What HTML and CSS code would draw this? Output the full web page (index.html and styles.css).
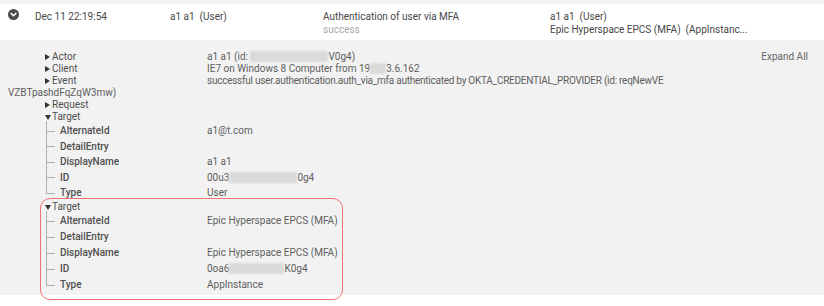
FILE: index.html
```html
<html>
    <head>
        <link rel="stylesheet" href="styles.css">
        <title>System Log</title>
    </head>
    <body>
        <div class="event">
            <div class="summary">
                <div class="cell toggle">
                    <svg width="11" height="11" viewBox="0 0 12 12"><circle cx="6" cy="6" r="6" fill="#4b4b4b"/><path d="M3.4 4.8 L6 7.3 L8.6 4.8" fill="none" stroke="#fff" stroke-width="1.6" stroke-linecap="round" stroke-linejoin="round"/></svg>
                </div>
                <div class="cell when">Dec 11 22:19:54</div>
                <div class="cell actor">a1 a1&nbsp; (User)</div>
                <div class="cell what">Authentication of user via MFA<br><span class="outcome">success</span></div>
                <div class="cell target">a1 a1&nbsp; (User)<br>Epic Hyperspace EPCS (MFA)&nbsp; (AppInstanc...</div>
            </div>

            <div class="detail">
                <a class="expandAll">Expand All</a>
                <div class="row"><span class="caret closed"></span><span class="label">Actor</span>a1 a1 (id: <span class="redact w78"></span>V0g4)</div>
                <div class="row"><span class="caret closed"></span><span class="label">Client</span>IE7 on Windows 8 Computer from 19<span class="redact w16"></span>3.6.162</div>
                <div class="row"><span class="caret closed"></span><span class="label">Event</span><span class="long">successful user.authentication.auth_via_mfa authenticated by OKTA_CREDENTIAL_PROVIDER (id: reqNewVE</span><br>VZBTpashdFqZqW3mw)</div>
                <div class="row"><span class="caret closed"></span><span class="label">Request</span></div>

                <div class="group">
                    <div class="row"><span class="caret open"></span><span class="label">Target</span></div>
                    <ul class="leaves">
                        <li><span class="key">AlternateId</span><span class="val">a1@t.com</span></li>
                        <li><span class="key">DetailEntry</span></li>
                        <li><span class="key">DisplayName</span><span class="val">a1 a1</span></li>
                        <li><span class="key">ID</span><span class="val">00u3<span class="redact w68"></span>0g4</span></li>
                        <li><span class="key">Type</span><span class="val">User</span></li>
                    </ul>
                </div>

                <div class="group marked">
                    <div class="row"><span class="caret open"></span><span class="label">Target</span></div>
                    <ul class="leaves wide">
                        <li><span class="key">AlternateId</span><span class="val">Epic Hyperspace EPCS (MFA)</span></li>
                        <li><span class="key">DetailEntry</span></li>
                        <li><span class="key">DisplayName</span><span class="val">Epic Hyperspace EPCS (MFA)</span></li>
                        <li><span class="key">ID</span><span class="val">0oa6<span class="redact w55"></span>K0g4</span></li>
                        <li><span class="key">Type</span><span class="val">AppInstance</span></li>
                    </ul>
                </div>
            </div>
        </div>
    </body>
</html>
```

FILE: styles.css
```css
html, body {margin: 0; padding: 0;}
body {font-family: Roboto, "Liberation Sans", sans-serif; font-size: 10px; background: #fff; color: #555;}

.event {padding-top: 4px; background: #f2f2f2; padding-bottom: 3px; border-bottom: 3px solid #fff;}

.summary {display: flex; background: #fff; height: 36px; padding-top: 6px; box-sizing: border-box; line-height: 13px; color: #474747;}
.summary .cell {flex: none;}
.toggle {width: 27px; padding-left: 8px; margin-top: -1px;}
.toggle svg {display: block;}
.when {width: 135px;}
.actor {width: 153px;}
.what {width: 227px;}
.target {flex: 1;}
.outcome {color: #a8a8a8;}

.detail {padding: 11px 16px 0 8px; height: 252px; box-sizing: border-box;}
.expandAll {float: right; color: #666; line-height: 12px;}

.row {line-height: 12px; color: #5e5e5e;}
.long {letter-spacing: -0.25px;}
.caret {display: inline-block; width: 7px; margin-left: 37px; height: 12px; vertical-align: top; position: relative;}
.caret::before {content: ""; position: absolute; left: 0; top: 3px; border-style: solid; border-color: transparent;}
.caret.closed::before {border-width: 3px 0 3px 5px; border-left-color: #333;}
.caret.open::before {top: 4px; border-width: 5px 3px 0 3px; border-top-color: #333;}
.label {display: inline-block; width: 155px; color: #4f4f4f;}

.group {position: relative;}
.leaves {list-style: none; margin: 0; padding: 0 0 0 52px;}
.leaves li {position: relative; display: flex; height: 15.5px; line-height: 15.5px; color: #5e5e5e;}
.leaves.wide li {height: 16px; line-height: 16px;}
.leaves li::before {content: ""; position: absolute; left: -14px; top: 50%; width: 9px; border-top: 1px solid #b0b0b0;}
.leaves li::after {content: ""; position: absolute; left: -14px; top: 0; height: 100%; border-left: 1px solid #b0b0b0;}
.leaves li:first-child::after {top: -2px; height: calc(100% + 2px);}
.leaves li:last-child::after {height: 50%;}
.key {flex: none; width: 147px; color: #4f4f4f; font-weight: 500;}
.val {flex: none;}

.redact {display: inline-block; height: 11px; vertical-align: -2px; background: #dadada; filter: blur(1px);}
.w16 {width: 16px;}
.w55 {width: 55px;}
.w68 {width: 68px;}
.w78 {width: 78px;}

.marked::after {content: ""; position: absolute; left: 32px; top: -3px; width: 301px; height: 100px; border: 1.5px solid #f07373; border-radius: 10px;}
```
